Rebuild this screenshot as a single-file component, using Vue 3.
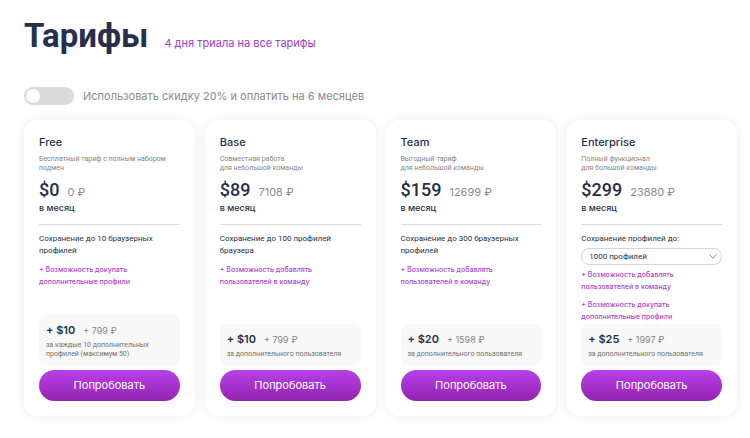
<script setup>
import { ref } from 'vue'

const halfYear = ref(false)
const profiles = ref('1000')

const plans = [
  {
    name: 'Free',
    desc: ['Бесплатный тариф с полным набором', 'подмен'],
    usd: '$0',
    rub: '0 ₽',
    limit: ['Сохранение до 10 браузерных', 'профилей'],
    extras: [['+ Возможность докупать', 'дополнительные профили']],
    addUsd: '+ $10',
    addRub: '+ 799 ₽',
    addNote: ['за каждые 10 дополнительных', 'профилей (максимум 50)']
  },
  {
    name: 'Base',
    desc: ['Совместная работа', 'для небольшой команды'],
    usd: '$89',
    rub: '7108 ₽',
    limit: ['Сохранение до 100 профилей', 'браузера'],
    extras: [['+ Возможность добавлять', 'пользователей в команду']],
    addUsd: '+ $10',
    addRub: '+ 799 ₽',
    addNote: ['за дополнительного пользователя']
  },
  {
    name: 'Team',
    desc: ['Выгодный тариф', 'для небольшой команды'],
    usd: '$159',
    rub: '12699 ₽',
    limit: ['Сохранение до 300 браузерных', 'профилей'],
    extras: [['+ Возможность добавлять', 'пользователей в команду']],
    addUsd: '+ $20',
    addRub: '+ 1598 ₽',
    addNote: ['за дополнительного пользователя']
  },
  {
    name: 'Enterprise',
    desc: ['Полный функционал', 'для большой команды'],
    usd: '$299',
    rub: '23880 ₽',
    select: true,
    extras: [
      ['+ Возможность добавлять', 'пользователей в команду'],
      ['+ Возможность докупать', 'дополнительные профили']
    ],
    addUsd: '+ $25',
    addRub: '+ 1997 ₽',
    addNote: ['за дополнительного пользователя']
  }
]
</script>

<template>
  <main class="pricing">
    <header class="head">
      <h1>Тарифы</h1>
      <p class="trial">4 дня триала на все тарифы</p>
    </header>

    <label class="discount">
      <input v-model="halfYear" type="checkbox" class="switch" />
      <span>Использовать скидку 20% и оплатить на 6 месяцев</span>
    </label>

    <section class="plans">
      <article v-for="plan in plans" :key="plan.name" class="card">
        <h2>{{ plan.name }}</h2>
        <p class="desc"><span v-for="line in plan.desc" :key="line" class="line">{{ line }}</span></p>
        <div class="price">
          <span class="usd">{{ plan.usd }}</span>
          <span class="rub">{{ plan.rub }}</span>
        </div>
        <p class="period">в месяц</p>
        <hr />
        <div v-if="plan.select" class="choice">
          <label for="profiles">Сохранение профилей до:</label>
          <div class="select-box">
            <select id="profiles" v-model="profiles">
              <option value="1000">1000 профилей</option>
            </select>
            <svg class="chevron" viewBox="0 0 8 5" aria-hidden="true">
              <path d="M0.5 0.5 L4 4.2 L7.5 0.5" />
            </svg>
          </div>
        </div>
        <p v-else class="limit"><span v-for="line in plan.limit" :key="line" class="line">{{ line }}</span></p>
        <div class="extras">
          <p v-for="extra in plan.extras" :key="extra[0]"><span v-for="line in extra" :key="line" class="line">{{ line }}</span></p>
        </div>
        <div class="addon">
          <div class="addon-price">
            <span class="add-usd">{{ plan.addUsd }}</span>
            <span class="add-rub">{{ plan.addRub }}</span>
          </div>
          <p class="note"><span v-for="line in plan.addNote" :key="line" class="line">{{ line }}</span></p>
        </div>
        <button type="button">Попробовать</button>
      </article>
    </section>
  </main>
</template>

<style>
body {
  margin: 0;
  background: #fefefe;
}
</style>

<style scoped>
.pricing {
  padding: 16px 13px 22px 24px;
  font-family: Inter, Roboto, "Liberation Sans", sans-serif;
  color: #27304a;
}
h1,
h2,
p {
  margin: 0;
}
.line {
  display: block;
  white-space: nowrap;
}
.head {
  display: flex;
  align-items: baseline;
  gap: 16px;
}
h1 {
  font-family: Roboto, Inter, sans-serif;
  font-size: 33px;
  line-height: 40px;
  font-weight: 700;
}
.trial {
  font-size: 11px;
  line-height: 16px;
  color: #a040c8;
}
.discount {
  display: flex;
  align-items: center;
  gap: 9px;
  margin-top: 30px;
  font-size: 11px;
  line-height: 20px;
  color: #8c8c8c;
}
.switch {
  appearance: none;
  flex: none;
  box-sizing: border-box;
  width: 50px;
  height: 18px;
  margin: 0;
  padding: 2px;
  border-radius: 9px;
  background: #dadada;
}
.switch::before {
  content: "";
  display: block;
  width: 14px;
  height: 14px;
  border-radius: 50%;
  background: #fff;
}
.switch:checked {
  background: #a637d6;
}
.switch:checked::before {
  margin-left: auto;
}
.plans {
  display: grid;
  grid-template-columns: repeat(4, minmax(0, 1fr));
  gap: 10px;
  margin-top: 14px;
}
.card {
  display: flex;
  flex-direction: column;
  padding: 14px 15px 15px;
  border-radius: 14px;
  background: #fff;
  box-shadow: 0 0 10px rgba(0, 0, 0, 0.07);
}
h2 {
  font-size: 11px;
  line-height: 16px;
  font-weight: 500;
}
.desc,
.limit,
.choice,
.note {
  font-family: Roboto, Inter, sans-serif;
}
.desc {
  margin-top: 5px;
  font-size: 7px;
  line-height: 9px;
  color: #858585;
}
.price {
  display: flex;
  align-items: baseline;
  gap: 8px;
  margin-top: 6px;
  line-height: 22px;
}
.usd {
  font-family: Roboto, Inter, sans-serif;
  font-size: 18px;
  font-weight: 500;
}
.rub {
  font-size: 11px;
  color: #8c8c8c;
}
.period {
  font-size: 9px;
  line-height: 10px;
  font-weight: 500;
}
hr {
  width: 100%;
  height: 1px;
  margin: 11px 0 8px;
  border: 0;
  background: #dcdcdc;
}
.limit,
.choice {
  font-size: 8px;
  line-height: 12px;
}
.choice label {
  display: block;
}
.select-box {
  display: grid;
  align-items: center;
  margin-top: 3px;
}
.select-box > * {
  grid-area: 1 / 1;
}
select {
  appearance: none;
  box-sizing: border-box;
  width: 100%;
  height: 17px;
  padding: 0 20px 0 7px;
  border: 1px solid #d6d6d6;
  border-radius: 8px;
  background: #fff;
  color: inherit;
  font: inherit;
}
.chevron {
  justify-self: end;
  width: 8px;
  height: 5px;
  margin-right: 5px;
  fill: none;
  stroke: #8c8c8c;
  stroke-width: 1;
  pointer-events: none;
}
.extras {
  display: grid;
  gap: 6px;
  margin-top: 7px;
  font-size: 7px;
  line-height: 12px;
  font-weight: 500;
  color: #ab48ce;
}
.choice + .extras {
  margin-top: 4px;
}
.addon {
  margin-top: auto;
  padding: 7px 7px 6px;
  border-radius: 6px;
  background: #f8f8f8;
}
.extras + .addon {
  margin-top: auto;
}
.extras {
  margin-bottom: 1px;
}
.addon-price {
  display: flex;
  align-items: baseline;
  gap: 8px;
  line-height: 16px;
}
.add-usd {
  font-size: 11px;
  font-weight: 600;
}
.add-rub {
  font-size: 9px;
  color: #858585;
}
.note {
  margin-top: 2px;
  font-size: 7px;
  line-height: 9px;
  color: #707070;
}
button {
  height: 31px;
  margin-top: 5px;
  padding: 0;
  border: 0;
  border-radius: 16px;
  background: linear-gradient(#b840ea, #9324b0);
  color: #fff;
  font: 11px/31px Inter, Roboto, "Liberation Sans", sans-serif;
}
</style>
